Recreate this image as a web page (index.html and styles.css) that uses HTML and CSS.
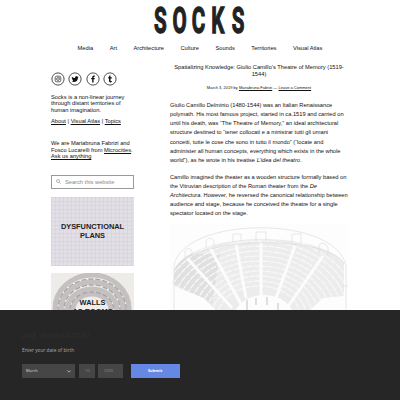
FILE: index.html
```html
<!DOCTYPE html>
<html lang="en">
<head>
<meta charset="utf-8">
<title>SOCKS</title>
<link rel="stylesheet" href="styles.css">
</head>
<body>
<header class="header">
  <svg class="logo" width="100" height="48" viewBox="0 0 100 48"><text class="logo-text" transform="scale(.55 1)" y="33.2" x="7.5 40.8 76 111.5 148.6">SOCKS</text></svg>
  <nav class="nav"><a>Media</a><a>Art</a><a>Architecture</a><a>Culture</a><a>Sounds</a><a>Territories</a><a>Visual Atlas</a></nav>
</header>
<div class="columns">
  <aside class="sidebar">
    <div class="social">
      <svg viewBox="0 0 14 14"><circle class="ring" cx="7" cy="7" r="6.1"/><rect class="line" x="4.2" y="4.2" width="5.6" height="5.6" rx="1.5"/><circle class="line" cx="7" cy="7" r="1.4"/><circle cx="8.7" cy="5.3" r=".4"/></svg>
      <svg viewBox="0 0 14 14"><circle class="ring" cx="7" cy="7" r="6.1"/><path d="M3.8 4.6Q5.1 6.1 7 6.1C6.8 4.2 8.7 3.7 9.5 4.7L10.5 4.4L10 5.2L10.6 5.1L9.9 5.9C9.9 9.5 6.3 10.9 3.5 9.3Q4.7 9.3 5.4 8.7Q4.4 8.4 4.2 7.7L4.8 7.6Q3.8 7.1 3.8 6.3L4.4 6.4Q3.5 5.6 3.8 4.6Z"/></svg>
      <svg viewBox="0 0 14 14"><circle class="ring" cx="7" cy="7" r="6.1"/><path d="M6.2 10.6V7.3H5.2V6H6.2V5.1Q6.2 3.5 7.8 3.5H8.8V4.7H8.1Q7.6 4.7 7.6 5.2V6H8.8L8.6 7.3H7.6V10.6Z"/></svg>
      <svg viewBox="0 0 14 14"><circle class="ring" cx="7" cy="7" r="6.1"/><path d="M6.3 3.6H7.5V5.3H8.8V6.5H7.5V8.4Q7.5 9.4 8.8 8.9V10.1C7.2 10.8 6 10.1 6 8.8V6.5H5.2V5.5Q6.3 5.1 6.3 3.6Z"/></svg>
    </div>
    <p class="about">Socks is a non-linear journey<br>through distant territories of<br>human imagination.</p>
    <p class="links"><u>About</u> | <u>Visual Atlas</u> | <u>Topics</u></p>
    <p class="authors">We are Mariabruna Fabrizi and<br>Fosco Lucarelli from <u>Microcities</u>.<br><u>Ask us anything</u></p>
    <div class="search"><svg width="5" height="5" viewBox="0 0 5 5"><circle class="lens" cx="2" cy="2" r="1.5"/><path class="lens" d="M3 3L4.7 4.7"/></svg><span>Search this website</span></div>
    <div class="card plans"><span>DYSFUNCTIONAL<br>PLANS</span></div>
    <div class="card walls">
      <svg class="art" viewBox="0 0 83 69"><g class="arches"><ellipse cx="41" cy="36" rx="37" ry="34"/><ellipse cx="41" cy="36" rx="31" ry="27"/><ellipse cx="41" cy="37" rx="25" ry="21"/><ellipse cx="41" cy="37" rx="19" ry="16"/></g><g class="arch-lines"><ellipse cx="41" cy="36" rx="34" ry="30"/><ellipse cx="41" cy="36" rx="28" ry="24"/><ellipse cx="41" cy="37" rx="22" ry="18"/></g></svg>
      <span>WALLS<br>AS ROOMS</span>
    </div>
  </aside>
  <main class="article">
    <h1>Spatializing Knowledge: Giulio Camillo’s Theatre of Memory (1519-<br>1544)</h1>
    <p class="meta">March 3, 2019 by <u>Mariabruna Fabrizi</u> — <u>Leave a Comment</u></p>
    <p class="copy">Giulio Camillo Delminio (1480-1544) was an Italian Renaissance<br>polymath. His most famous project, started in ca.1519 and carried on<br>until his death, was “The Theatre of Memory,” an ideal architectural<br>structure destined to “tener collocati e a ministrar tutti gli umani<br>concetti, tutte le cose che sono in tutto il mondo” (“locate and<br>administer all human concepts, everything which exists in the whole<br>world”), as he wrote in his treatise <i>L’idea del theatro</i>.</p>
    <p class="copy">Camillo imagined the theater as a wooden structure formally based on<br>the Vitruvian description of the Roman theater from the <i>De<br>Architectura</i>. However, he reversed the canonical relationship between<br>audience and stage, because he conceived the theatre for a single<br>spectator located on the stage.</p>
    <svg class="theatre" width="178" height="100" viewBox="0 0 178 100">
      <defs><clipPath id="bowl"><path d="M4 46C24 6 149 6 174 39V72L153 74L138 88H47L34 74L4 62Z"/></clipPath></defs>
      <rect class="paper" width="178" height="100"/>
      <g clip-path="url(#bowl)"><rect class="shade" width="178" height="100"/><path class="shade-dark" d="M4 30H50L42 80L4 60Z"/>
        <g class="tiers"><ellipse cx="89" cy="92" rx="101" ry="80"/><ellipse cx="89" cy="92" rx="95" ry="75"/><ellipse cx="89" cy="92" rx="89" ry="70"/><ellipse cx="89" cy="92" rx="83" ry="65"/><ellipse cx="89" cy="92" rx="77" ry="60"/><ellipse cx="89" cy="92" rx="71" ry="55"/><ellipse cx="89" cy="92" rx="65" ry="50"/><ellipse cx="89" cy="92" rx="59" ry="45"/><ellipse cx="89" cy="92" rx="53" ry="40"/><ellipse cx="89" cy="92" rx="47" ry="35"/><ellipse cx="89" cy="92" rx="41" ry="30"/></g>
        <path class="aisles" d="M17 34L62 84M40 24L72 82M66 20L76 74M91 18V74M125 22L106 74M153 32L117 84"/>
        <ellipse class="stage" cx="94" cy="94" rx="30" ry="23"/>
      </g>
      <path class="outline" d="M4 95V42C12-8 166-10 176 42V95M6 45C22 12 154 10 174 39M4 59L2 58M172 62H178M15 34V27Q18 22 22 27V31M36 24V17Q40 11 44 17V22M63 18V10H71V17M86 17V8H96V17M122 18V10H131V20M149 29V21Q154 16 158 24V32"/>
      <path class="figures" d="M77 76V86M86 74V81M97 73V81M108 79V87M71 86V92M115 86V94"/>
    </svg>
  </main>
</div>
<section class="age">
  <h2>AGE VERIFICATION</h2>
  <p>Enter your date of birth</p>
  <div class="form"><div class="month">March<svg width="4" height="3" viewBox="0 0 4 3"><path class="chevron" d="M.3 .5L2 2.2L3.7 .5"/></svg></div><div class="day">10</div><div class="year">2000</div><div class="submit">Submit</div></div>
</section>
</body>
</html>
```
FILE: styles.css
```css
* { box-sizing: border-box; }
body { margin: 0; width: 400px; height: 400px; overflow: hidden; background: #fff; color: #111; font-family: "Liberation Sans", Arial, sans-serif; font-size: 6px; }
p, h1, h2 { margin: 0; font-weight: normal; white-space: nowrap; }
svg { display: block; flex: none; }
.header { height: 63px; }
.logo { margin: 0 auto; overflow: visible; }
.logo-text { font: bold 37.5px Roboto, sans-serif; fill: #222; stroke: #222; stroke-width: 1.3; }
.nav { display: flex; justify-content: center; gap: 16.5px; margin-top: -4px; line-height: 8px; font-size: 5.72px; }
.columns { display: flex; gap: 36px; padding-left: 51px; }
.sidebar { width: 83px; padding-top: 9px; line-height: 6.5px; font-size: 5.72px; }
.social { display: flex; gap: 3.4px; height: 14px; margin-bottom: 7.5px; }
.social svg { width: 14px; height: 14px; fill: #111; }
.social .ring { fill: none; stroke: #222; stroke-width: .8; }
.social .line { fill: none; stroke: #222; stroke-width: .7; }
.links { margin-top: 5px; }
.authors { margin-top: 15.5px; }
.search { display: flex; align-items: center; gap: 4px; height: 14px; margin-top: 15px; padding-left: 4px; border: 1px solid #999; color: #888; font-size: 5.7px; }
.search span { position: relative; top: .6px; }
.lens { fill: none; stroke: #888; stroke-width: .6; }
.card { position: relative; display: flex; align-items: center; justify-content: center; height: 69px; margin-top: 8px; text-align: center; font-size: 7.4px; line-height: 9px; font-weight: bold; color: #222; }
.card span { position: relative; }
.plans { background: repeating-linear-gradient(90deg, #c8b9cc40 0 1px, transparent 1px 4px), repeating-linear-gradient(#c8bacc40 0 1px, transparent 1px 4px), #e3dfe6; }
.walls { margin-top: 7px; background: #eeece9; }
.art { position: absolute; inset: 0; width: 83px; height: 69px; }
.arches { fill: #efedec; stroke: #c4c0c0; stroke-width: 5; }
.arch-lines { fill: none; stroke: #a5a3a3; stroke-width: 1.3; stroke-dasharray: 5 2; }
.article { width: 178px; }
.article h1 { text-align: center; font-size: 5.72px; line-height: 6.6px; padding-top: 1px; }
.meta { margin: 8px 0 10px; text-align: center; font-size: 4px; line-height: 6px; }
.copy { margin-bottom: 8px; font-size: 5.7px; line-height: 9.1px; }
.theatre { margin-top: -2px; }
.paper { fill: #fdfdfd; }
.shade { fill: #ececec; }
.shade-dark { fill: #e0e0e0; }
.tiers { fill: none; stroke: #f8f8f8; stroke-width: 1.3; stroke-dasharray: 6 1; }
.aisles { fill: none; stroke: #fcfcfc; stroke-width: 3; }
.stage { fill: #fdfdfd; }
.outline { fill: none; stroke: #ddd; stroke-width: .7; }
.figures { fill: none; stroke: #ccc; stroke-width: 1.2; }
.age { position: fixed; left: 0; right: 0; bottom: 0; height: 90px; padding: 20px 22px; background: #262626; color: #aaa; font-family: "Open Sans", sans-serif; }
.age h2 { height: 10px; font-size: 7.8px; line-height: 10px; color: #303030; }
.age p { margin-top: 7px; font-size: 4.77px; line-height: 7px; }
.form { display: flex; height: 14px; margin-top: 10px; font-size: 4px; line-height: 14px; }
.month { display: flex; align-items: center; justify-content: space-between; width: 53px; padding: 0 4px; background: #464646; color: #ddd; }
.day { width: 16px; margin-left: 4px; padding-left: 6px; background: #464646; color: #888; }
.year { width: 25px; margin-left: 3px; padding-left: 6px; background: #464646; color: #888; }
.submit { width: 49px; margin-left: 7.5px; background: #6688e4; color: #fff; font-weight: bold; text-align: center; }
.chevron { fill: none; stroke: #ddd; stroke-width: .7; }
```
